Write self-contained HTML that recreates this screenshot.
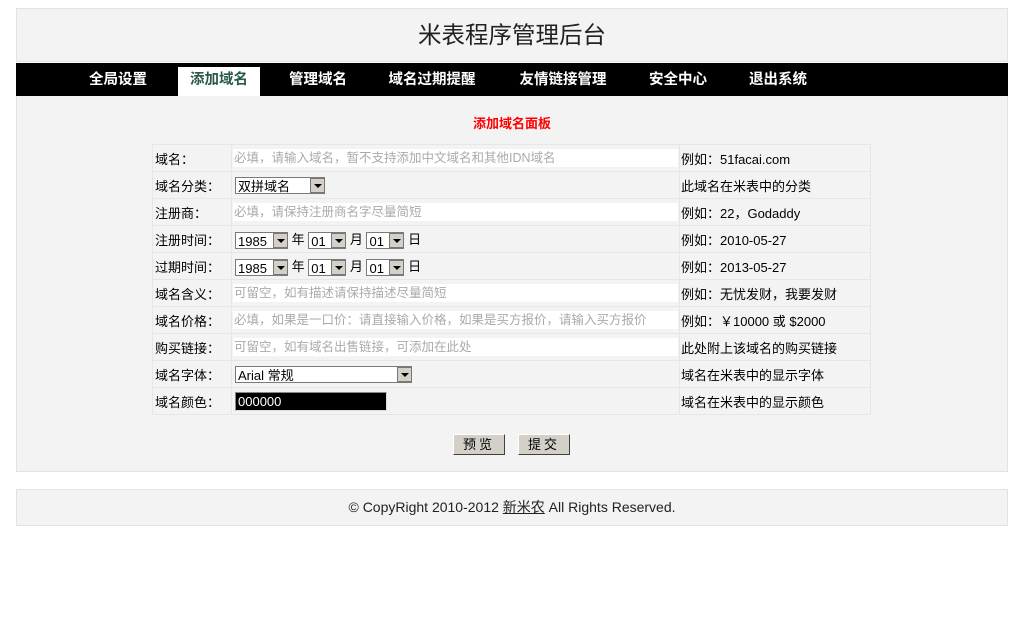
<!DOCTYPE html>
<html><head><meta charset="utf-8"><style>
body{margin:0;background:#fff;font-family:"Liberation Sans","Noto Sans CJK SC",sans-serif;font-size:13px;color:#000;position:relative;width:1024px;height:634px;overflow:hidden}
.box{position:absolute;left:16px;width:990px;background:#f3f3f3;border:1px solid #e2e2e2}
.nav{position:absolute;left:16px;top:63px;width:992px;height:33px;background:#000}
.nav span{position:absolute;top:4px;height:29px;line-height:27px;color:#fff;font-weight:bold;font-size:14.5px;text-align:center}
.nav span.on{background:#fff;color:#2a5a46}
table{position:absolute;left:152px;top:144px;border-collapse:separate;border-spacing:0;}
td{border:1px solid #e6e6e6;border-width:0 1px 1px 0;height:26px;padding:0;font-size:13px;white-space:nowrap}
tr td:first-child{border-left:1px solid #e6e6e6}
tr:first-child td{border-top:1px solid #e6e6e6}
.l{width:76px;padding-left:2px}
.m{width:446px;padding-left:1px}
.r{width:189px;padding-left:1px}
.inp{display:block;width:444px;height:18px;background:#fff;color:#aaa;line-height:18px;font-size:12.5px;padding-left:1px}
.sel{display:inline-block;height:17px;border:1px solid #7a7a7a;border-right:none;background:#fff;line-height:17px;vertical-align:middle;position:relative;padding-left:2px;box-sizing:border-box}
.sel b{position:absolute;right:0;top:0;width:15px;height:15px;background:#d4d0c8;border:1px solid #777;box-sizing:border-box}
.sel b:after{content:"";position:absolute;left:3px;top:5px;border:4px solid transparent;border-top:4px solid #000;border-bottom:none}
.btn{position:absolute;top:434px;width:52px;height:21px;background:#d4d0c8;border:1px solid;border-color:#fff #404040 #404040 #fff;box-sizing:border-box;text-align:center;line-height:19px;font-size:13px;letter-spacing:3px}
</style></head><body>
<div class="box" style="top:8px;height:52px;text-align:center;line-height:52px;font-size:23.5px;color:#222">米表程序管理后台</div>
<div class="nav">
<span style="left:62px;width:80px">全局设置</span>
<span class="on" style="left:162px;width:82px">添加域名</span>
<span style="left:262px;width:80px">管理域名</span>
<span style="left:362px;width:108px">域名过期提醒</span>
<span style="left:492px;width:110px">友情链接管理</span>
<span style="left:622px;width:80px">安全中心</span>
<span style="left:722px;width:80px">退出系统</span>
</div>
<div class="box" style="top:96px;height:375px;border-top:none"></div>
<div style="position:absolute;left:0;width:1024px;top:113px;text-align:center;color:#f00;font-weight:bold;font-size:13px">添加域名面板</div>
<table>
<tr><td class="l">域名：</td><td class="m"><span class="inp">必填，请输入域名，暂不支持添加中文域名和其他IDN域名</span></td><td class="r">例如：51facai.com</td></tr>
<tr><td class="l">域名分类：</td><td class="m"><span class="sel" style="width:90px;margin-left:2px">双拼域名<b></b></span></td><td class="r">此域名在米表中的分类</td></tr>
<tr><td class="l">注册商：</td><td class="m"><span class="inp">必填，请保持注册商名字尽量简短</span></td><td class="r">例如：22，Godaddy</td></tr>
<tr><td class="l">注册时间：</td><td class="m"><span class="sel" style="width:53px;margin-left:2px">1985<b></b></span> 年 <span class="sel" style="width:38px">01<b></b></span> 月 <span class="sel" style="width:38px">01<b></b></span> 日</td><td class="r">例如：2010-05-27</td></tr>
<tr><td class="l">过期时间：</td><td class="m"><span class="sel" style="width:53px;margin-left:2px">1985<b></b></span> 年 <span class="sel" style="width:38px">01<b></b></span> 月 <span class="sel" style="width:38px">01<b></b></span> 日</td><td class="r">例如：2013-05-27</td></tr>
<tr><td class="l">域名含义：</td><td class="m"><span class="inp">可留空，如有描述请保持描述尽量简短</span></td><td class="r">例如：无忧发财，我要发财</td></tr>
<tr><td class="l">域名价格：</td><td class="m"><span class="inp">必填，如果是一口价：请直接输入价格，如果是买方报价，请输入买方报价</span></td><td class="r">例如：￥10000 或 $2000</td></tr>
<tr><td class="l">购买链接：</td><td class="m"><span class="inp">可留空，如有域名出售链接，可添加在此处</span></td><td class="r">此处附上该域名的购买链接</td></tr>
<tr><td class="l">域名字体：</td><td class="m"><span class="sel" style="width:177px;margin-left:2px">Arial 常规<b></b></span></td><td class="r">域名在米表中的显示字体</td></tr>
<tr><td class="l">域名颜色：</td><td class="m"><span style="display:inline-block;margin-left:2px;width:152px;height:19px;background:#000;color:#fff;border:1px solid #888;border-right-color:#ddd;border-bottom-color:#ddd;box-sizing:border-box;line-height:17px;padding-left:2px;vertical-align:middle">000000</span></td><td class="r">域名在米表中的显示颜色</td></tr>
</table>
<div class="btn" style="left:453px">预览</div>
<div class="btn" style="left:518px">提交</div>
<div class="box" style="top:489px;height:35px;text-align:center;line-height:35px;font-size:14px;color:#222">© CopyRight 2010-2012 <u>新米农</u> All Rights Reserved.</div>
</body></html>
